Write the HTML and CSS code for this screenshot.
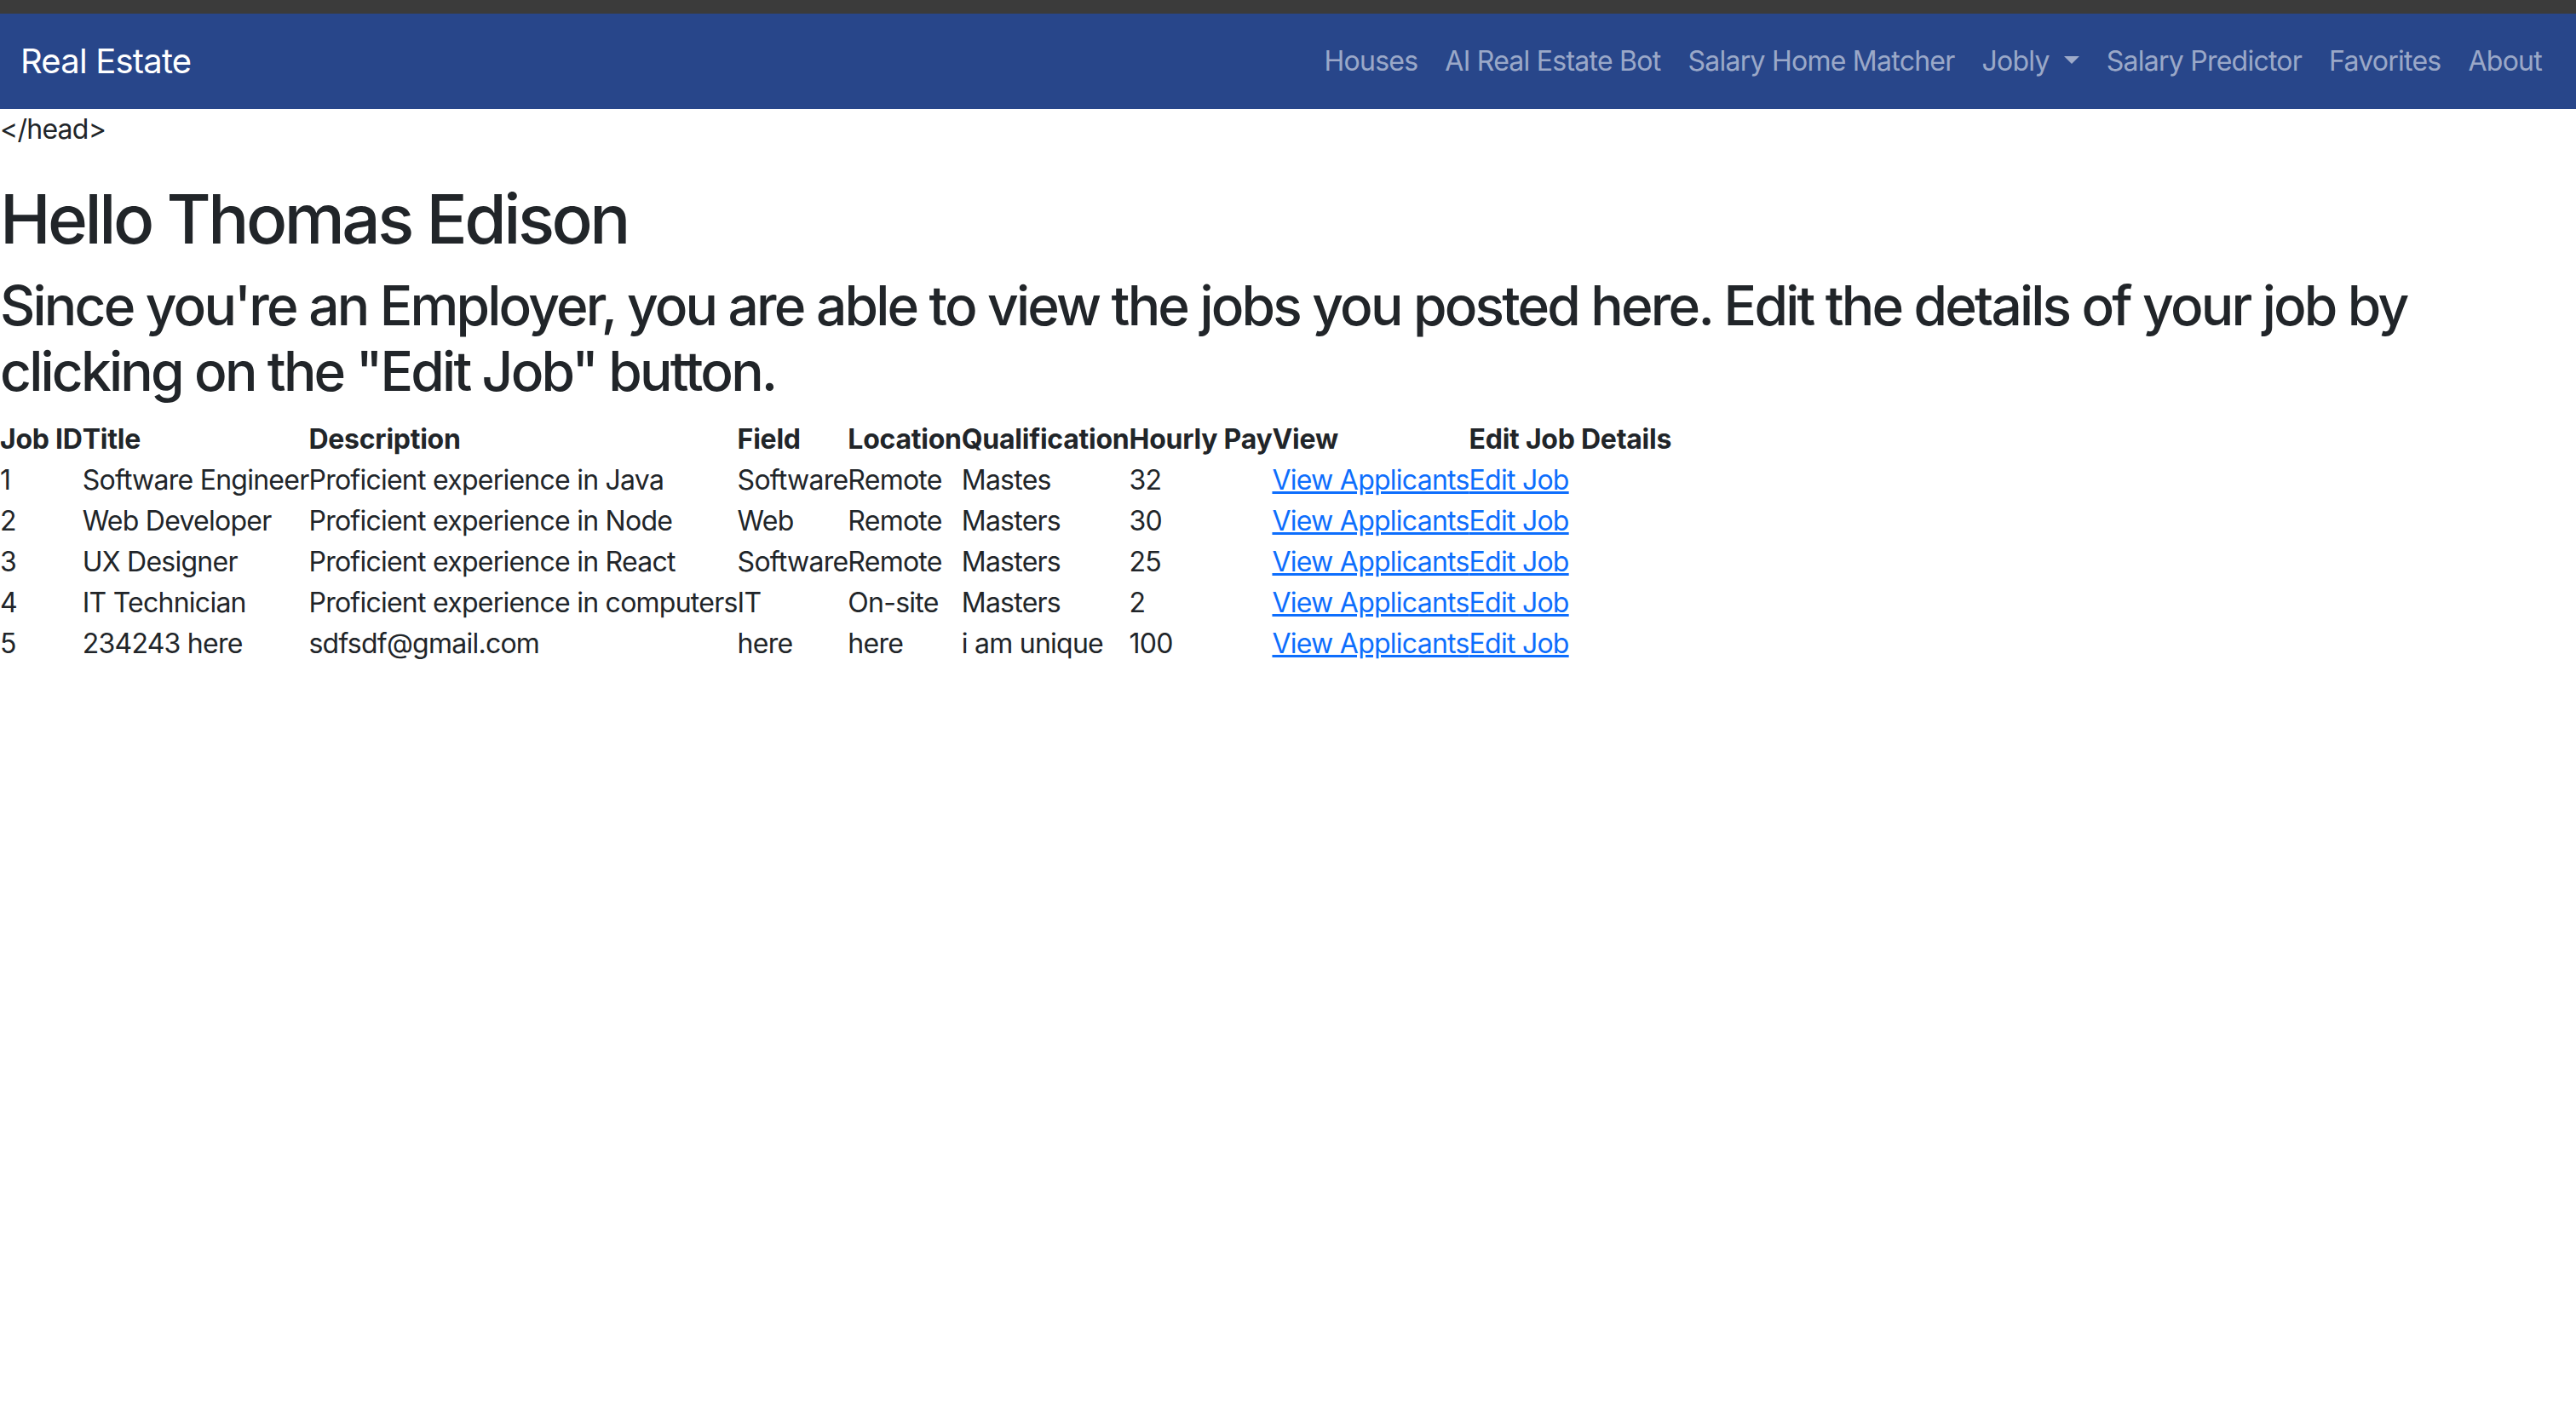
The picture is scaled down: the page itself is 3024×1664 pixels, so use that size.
FILE: index.html
```html
<!DOCTYPE html>
<html lang="en">
<head>
<meta charset="utf-8">
<title>Real Estate</title>
<link rel="stylesheet" href="styles.css">
</head>
<body>
<div class="topstrip"></div>
<nav class="navbar">
  <div class="nav-container">
    <a class="brand" href="#">Real Estate</a>
    <ul class="nav-list">
      <li><a class="nav-link" href="#">Houses</a></li>
      <li><a class="nav-link" href="#">AI Real Estate Bot</a></li>
      <li><a class="nav-link" href="#">Salary Home Matcher</a></li>
      <li><a class="nav-link dropdown-toggle" href="#">Jobly</a></li>
      <li><a class="nav-link" href="#">Salary Predictor</a></li>
      <li><a class="nav-link" href="#">Favorites</a></li>
      <li><a class="nav-link" href="#">About</a></li>
    </ul>
  </div>
</nav>
<p class="stray">&lt;/head&gt;</p>
<h1 class="title">Hello Thomas Edison</h1>
<h2 class="subtitle">Since you're an Employer, you are able to view the jobs you posted here. Edit the details of your job by clicking on the "Edit Job" button.</h2>
<table class="jobs">
  <thead>
    <tr>
      <th>Job ID</th><th>Title</th><th>Description</th><th>Field</th><th>Location</th><th>Qualification</th><th>Hourly Pay</th><th>View</th><th>Edit Job Details</th>
    </tr>
  </thead>
  <tbody>
    <tr><td>1</td><td>Software Engineer</td><td>Proficient experience in Java</td><td>Software</td><td>Remote</td><td>Mastes</td><td>32</td><td><a href="#">View Applicants</a></td><td><a href="#">Edit Job</a></td></tr>
    <tr><td>2</td><td>Web Developer</td><td>Proficient experience in Node</td><td>Web</td><td>Remote</td><td>Masters</td><td>30</td><td><a href="#">View Applicants</a></td><td><a href="#">Edit Job</a></td></tr>
    <tr><td>3</td><td>UX Designer</td><td>Proficient experience in React</td><td>Software</td><td>Remote</td><td>Masters</td><td>25</td><td><a href="#">View Applicants</a></td><td><a href="#">Edit Job</a></td></tr>
    <tr><td>4</td><td>IT Technician</td><td>Proficient experience in computers</td><td>IT</td><td>On-site</td><td>Masters</td><td>2</td><td><a href="#">View Applicants</a></td><td><a href="#">Edit Job</a></td></tr>
    <tr><td>5</td><td>234243 here</td><td>sdfsdf@gmail.com</td><td>here</td><td>here</td><td>i am unique</td><td>100</td><td><a href="#">View Applicants</a></td><td><a href="#">Edit Job</a></td></tr>
  </tbody>
</table>
</body>
</html>
```
FILE: styles.css
```css
* { box-sizing: border-box; }
html, body { margin: 0; padding: 0; }
body {
  font-family: Inter, "Noto Sans", "Liberation Sans", sans-serif;
  font-size: 32px;
  line-height: 1.5;
  letter-spacing: -0.75px;
  color: #212529;
  background: #fff;
}
.topstrip {
  height: 16px;
  background: #3b3b3b;
}
.navbar {
  background: #28468a;
  padding: 16px 0;
}
.nav-container {
  display: flex;
  align-items: center;
  justify-content: space-between;
  padding: 0 24px;
}
.brand {
  font-size: 40px;
  line-height: 60px;
  padding: 10px 0;
  letter-spacing: -0.8px;
  color: #fff;
  text-decoration: none;
}
.nav-list {
  display: flex;
  list-style: none;
  margin: 0;
  padding: 0;
}
.nav-link {
  display: block;
  padding: 16px 16px;
  color: rgba(255, 255, 255, 0.55);
  text-decoration: none;
  line-height: 48px;
}
.dropdown-toggle::after {
  content: "";
  display: inline-block;
  margin-left: 17px;
  vertical-align: 8px;
  border-top: 9.6px solid;
  border-right: 9.6px solid transparent;
  border-left: 9.6px solid transparent;
  border-bottom: 0;
}
.stray {
  margin: 0 0 33px;
}
.title {
  font-size: 80px;
  line-height: 1.2;
  font-weight: 500;
  letter-spacing: -3.5px;
  margin: 0 0 16px;
}
.subtitle {
  font-size: 64px;
  line-height: 1.2;
  font-weight: 500;
  letter-spacing: -2.8px;
  margin: 0 0 17px;
}
.jobs {
  border-collapse: collapse;
}
.jobs th, .jobs td {
  padding: 0;
  text-align: left;
  white-space: nowrap;
}
.jobs th { font-weight: 700; letter-spacing: -0.25px; }
.jobs a { color: #0d6efd; text-decoration: underline; }
```
